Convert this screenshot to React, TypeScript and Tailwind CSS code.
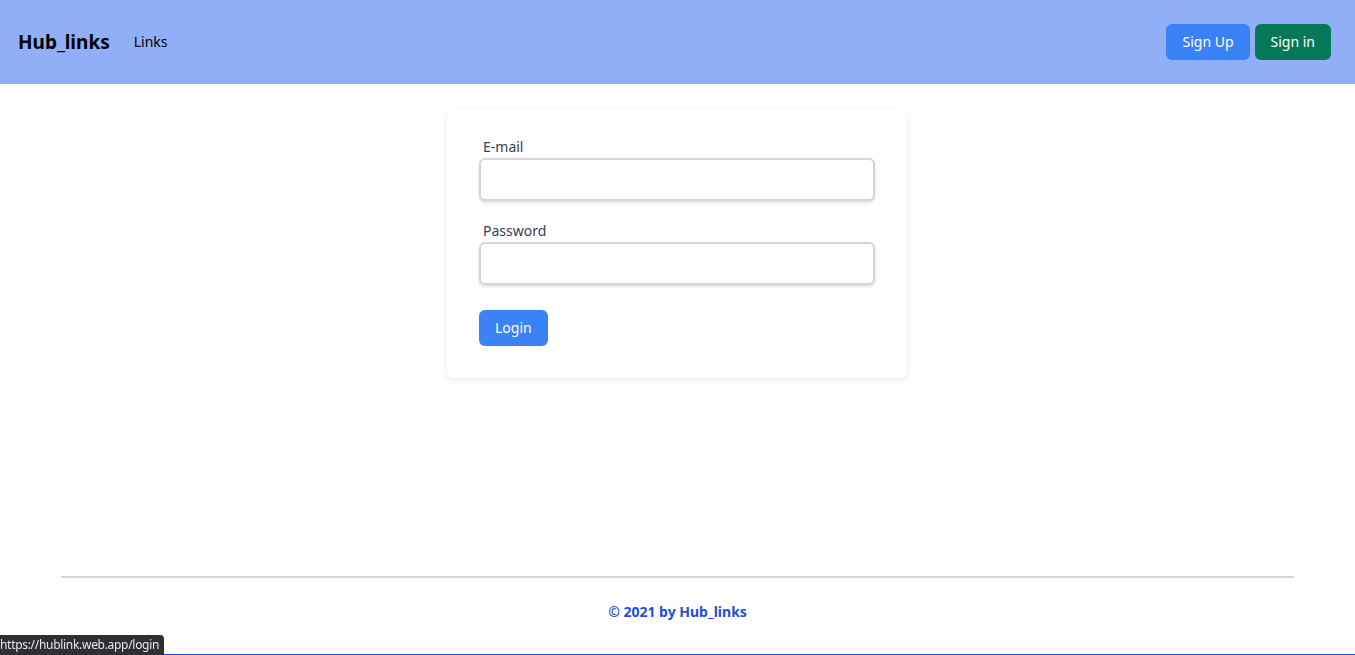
import { useState } from 'react'

export default function App() {
  const [email, setEmail] = useState('')
  const [password, setPassword] = useState('')

  return (
    <div
      className="min-h-screen flex flex-col bg-white text-gray-900"
      style={{ fontFamily: '"Noto Sans", "Open Sans", sans-serif' }}
    >
      <header className="h-[84px] bg-[#91aff6] flex items-center justify-between pl-[18px] pr-6">
        <div className="flex items-center">
          <a href="#" className="text-[19px] font-bold text-black">Hub_links</a>
          <a href="#" className="ml-6 text-sm text-black">Links</a>
        </div>
        <div className="flex items-center gap-[5px]">
          <button className="h-9 px-4 rounded-md bg-[#3b82f6] text-sm text-white">Sign Up</button>
          <button className="h-9 px-4 rounded-md bg-[#047857] text-sm text-white">Sign in</button>
        </div>
      </header>

      <main className="flex-1 flex justify-center pt-[26px] pr-px">
        <form
          className="w-[460px] self-start bg-white rounded-md shadow-[0_2px_6px_rgba(0,0,0,0.1)] px-8 pt-[27px] pb-8"
          onSubmit={(e) => e.preventDefault()}
        >
          <div className="mb-5">
            <label htmlFor="email" className="block px-1 text-sm leading-5 text-gray-700">E-mail</label>
            <input
              id="email"
              type="email"
              value={email}
              onChange={(e) => setEmail(e.target.value)}
              className="mt-px block w-full h-[43px] px-3 rounded-md border-2 border-gray-300 bg-white shadow-[0_2px_3px_rgba(0,0,0,0.12)] text-sm focus:outline-none"
            />
          </div>
          <div>
            <label htmlFor="password" className="block px-1 text-sm leading-5 text-gray-700">Password</label>
            <input
              id="password"
              type="password"
              value={password}
              onChange={(e) => setPassword(e.target.value)}
              className="mt-px block w-full h-[43px] px-3 rounded-md border-2 border-gray-300 bg-white shadow-[0_2px_3px_rgba(0,0,0,0.12)] text-sm focus:outline-none"
            />
          </div>
          <button type="submit" className="mt-[25px] h-9 px-4 rounded-md bg-[#3b82f6] text-sm text-white">
            Login
          </button>
        </form>
      </main>

      <footer className="mx-[61px] border-t-2 border-gray-300 pt-6 pb-8 text-center">
        <p className="text-sm leading-5 font-bold text-[#1d4ed8]">© 2021 by Hub_links</p>
      </footer>
      <div className="h-px bg-[#1d4ed8]" />

      <div className="fixed left-0 bottom-0 h-5 w-[164px] pr-1 flex items-center overflow-hidden bg-[#2e2f31] rounded-tr text-xs tracking-[-0.3px] text-gray-200">
        https://hublink.web.app/login
      </div>
    </div>
  )
}
